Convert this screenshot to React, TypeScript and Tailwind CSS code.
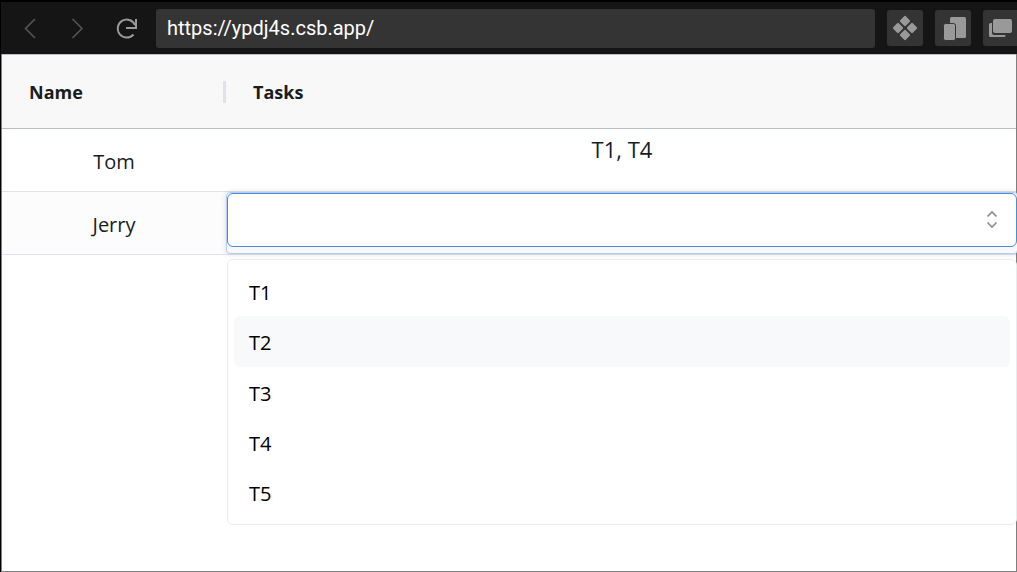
import { useState } from "react";

const options = ["T1", "T2", "T3", "T4", "T5"];

function ToolButton({ label, children }: { label: string; children: React.ReactNode }) {
  return (
    <button
      type="button"
      aria-label={label}
      className="flex size-9 shrink-0 items-center justify-center rounded-[3px] bg-[#343434]"
    >
      <svg width="36" height="36" viewBox="0 0 36 36" fill="#999999" aria-hidden="true">
        {children}
      </svg>
    </button>
  );
}

function NavButton({ label, children }: { label: string; children: React.ReactNode }) {
  return (
    <button type="button" aria-label={label} className="flex size-6 shrink-0 items-center justify-center">
      <svg width="24" height="24" viewBox="0 0 24 24" fill="none" aria-hidden="true">
        {children}
      </svg>
    </button>
  );
}

function BrowserBar() {
  const [url, setUrl] = useState("https://ypdj4s.csb.app/");
  return (
    <header className="flex h-[54px] items-center overflow-hidden border-t-2 border-black bg-[#151515] pl-[17px]">
      <div className="flex shrink-0 gap-6">
        <NavButton label="Back">
          <path d="M17 3 7.500 12.500 17 22" stroke="#555555" strokeWidth="1.6" />
        </NavButton>
        <NavButton label="Forward">
          <path d="M6.500 3 16 12.500 6.500 22" stroke="#555555" strokeWidth="1.6" />
        </NavButton>
        <NavButton label="Reload">
          <path d="M22 3V12H12" stroke="#999999" strokeWidth="2" />
          <path d="M21 9A9 9 0 1 0 19.500 18.500" stroke="#999999" strokeWidth="1.900" />
        </NavButton>
      </div>
      <input
        type="text"
        aria-label="Address"
        value={url}
        onChange={(e) => setUrl(e.target.value)}
        className="ml-[18px] h-[39px] min-w-0 flex-1 rounded-[3px] bg-[#343434] px-[11px] font-['Roboto',sans-serif] text-xl text-white outline-none"
      />
      <div className="-mr-0.5 ml-3 flex shrink-0 gap-3">
        <ToolButton label="Components">
          <rect x="14" y="7" width="8" height="8" rx="1.5" transform="rotate(45 18 11)" />
          <rect x="7" y="14" width="8" height="8" rx="1.5" transform="rotate(45 11 18)" />
          <rect x="21" y="14" width="8" height="8" rx="1.5" transform="rotate(45 25 18)" />
          <rect x="14" y="21" width="8" height="8" rx="1.5" transform="rotate(45 18 25)" />
        </ToolButton>
        <ToolButton label="Responsive preview">
          <rect x="15" y="7" width="16" height="21" rx="1.5" />
          <rect x="8.5" y="13.5" width="12" height="17" rx="2" stroke="#343434" />
        </ToolButton>
        <ToolButton label="Open in new window">
          <path d="M8 13h-.5A1.5 1.5 0 0 0 6 14.500V25.500A1.500 1.500 0 0 0 7.500 27H21a1.500 1.500 0 0 0 1.500-1.500V25H11a2 2 0 0 1-2-2V13Z" />
          <rect x="10" y="9" width="19" height="14" rx="2" />
        </ToolButton>
      </div>
    </header>
  );
}

function TaskEditor() {
  const [value, setValue] = useState("");
  const [active, setActive] = useState("T2");
  return (
    <div className="relative -mr-0.5 h-[62px] rounded-[4px] border border-[#b5cdf2] bg-[#f8f8f8] shadow-[0_0_6px_rgba(0,0,0,0.12)]">
      <div className="relative h-[54px]">
        <input
          type="text"
          role="combobox"
          aria-label="Tasks"
          aria-expanded="true"
          aria-controls="task-options"
          value={value}
          onChange={(e) => setValue(e.target.value)}
          className="h-full w-full rounded-[6px] border border-[#4a8be0] bg-white px-5 text-xl outline-none"
        />
        <svg
          className="pointer-events-none absolute top-[17px] right-[18px]"
          width="14"
          height="20"
          viewBox="0 0 14 20"
          fill="none"
          stroke="#868e96"
          strokeWidth="1.7"
          aria-hidden="true"
        >
          <path d="M2.500 6.500 7 2l4.500 4.500M2.500 12.500 7 17l4.500-4.500" />
        </svg>
      </div>
      <ul
        id="task-options"
        role="listbox"
        aria-label="Task options"
        className="absolute top-[66px] right-0 left-0 flex h-[266px] flex-col rounded-[6px] border border-[#e9ecef] bg-white p-1.5 text-xl text-black"
      >
        {options.map((option) => (
          <li
            key={option}
            role="option"
            aria-selected={option === value}
            onMouseEnter={() => setActive(option)}
            onClick={() => setValue(option)}
            className={
              option === active
                ? "flex flex-1 items-center rounded-[6px] bg-[#f8f9fa] px-[15px] pt-[3px]"
                : "flex flex-1 items-center rounded-[6px] px-[15px] pt-[3px]"
            }
          >
            {option}
          </li>
        ))}
      </ul>
    </div>
  );
}

export default function App() {
  return (
    <div className="flex min-h-screen flex-col border-l border-black bg-white font-['Open_Sans','Noto_Sans',sans-serif] text-[#181d1f]">
      <BrowserBar />
      <main className="flex-1 border-r border-b border-l border-[#7f7f7f]">
        <table className="w-full table-fixed border-separate border-spacing-0">
          <colgroup>
            <col className="w-[224px]" />
            <col />
          </colgroup>
          <thead>
            <tr className="h-[75px] bg-[#f8f8f8] text-left text-lg font-bold">
              <th scope="col" className="border-y border-[#babfc7] pl-[27px]">
                <div className="flex items-center justify-between">
                  Name
                  <span className="h-[22px] w-[3px] bg-[#dde2eb]" />
                </div>
              </th>
              <th scope="col" className="border-y border-[#babfc7] pl-[27px]">
                Tasks
              </th>
            </tr>
          </thead>
          <tbody>
            <tr className="h-[63px] text-center">
              <td className="border-b border-[#dde2eb] pt-1 text-xl">Tom</td>
              <td className="border-b border-[#dde2eb] pt-1 pl-0.5 align-top text-[22px]">T1, T4</td>
            </tr>
            <tr className="h-[63px] bg-[#fcfcfc] text-center">
              <td className="border-b border-[#dde2eb] pt-1 text-xl">Jerry</td>
              <td className="border-b border-[#dde2eb] p-0 text-left align-top">
                <TaskEditor />
              </td>
            </tr>
          </tbody>
        </table>
      </main>
    </div>
  );
}
